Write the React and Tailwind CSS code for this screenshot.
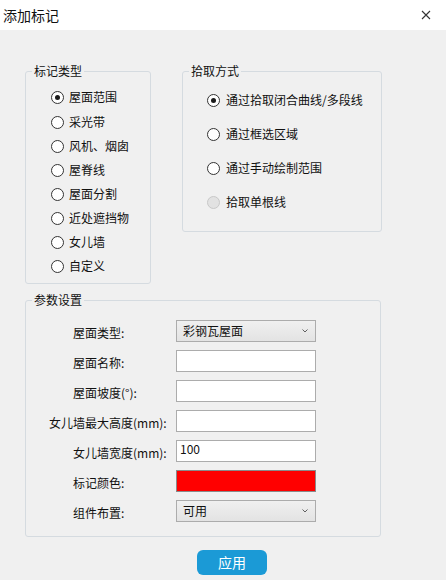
import React from 'react';

const font = { fontFamily: '"Noto Sans CJK SC", "Noto Sans", sans-serif' };

const Radio = ({ checked, disabled }) => (
  <span
    className={`w-[13px] h-[13px] rounded-full border flex items-center justify-center shrink-0 ${
      disabled ? 'border-[#c8c8c8] bg-[#e2e2e2]' : 'border-[#333] bg-white'
    }`}
  >
    {checked && <span className="w-[5px] h-[5px] rounded-full bg-[#1a1a1a]" />}
  </span>
);

const Chevron = () => (
  <svg width="8" height="6" viewBox="0 0 8 6" className="mr-[6px]">
    <path d="M1.5 1.5 L4 4 L6.5 1.5" fill="none" stroke="#606060" strokeWidth="1" />
  </svg>
);

const Combo = ({ value }) => (
  <div className="w-[140px] h-[22px] border border-[#acacac] bg-gradient-to-b from-[#f0f0f0] to-[#e3e3e3] flex items-center justify-between">
    <span className="pl-[6px] text-[12px] text-[#111]">{value}</span>
    <Chevron />
  </div>
);

const Input = ({ value }) => (
  <div className="w-[140px] h-[22px] border border-[#acacac] bg-white text-[12px] leading-[16px] pl-[3px] text-[#111]">
    {value}
  </div>
);

const App = () => {
  const types = ['屋面范围', '采光带', '风机、烟囱', '屋脊线', '屋面分割', '近处遮挡物', '女儿墙', '自定义'];
  const modes = ['通过拾取闭合曲线/多段线', '通过框选区域', '通过手动绘制范围', '拾取单根线'];
  const params = [
    { label: '屋面类型:', field: <Combo value="彩钢瓦屋面" /> },
    { label: '屋面名称:', field: <Input /> },
    { label: '屋面坡度(°):', field: <Input /> },
    { label: '女儿墙最大高度(mm):', field: <Input />, long: true },
    { label: '女儿墙宽度(mm):', field: <Input value="100" /> },
    { label: '标记颜色:', field: <div className="w-[140px] h-[22px] border border-[#8a8a8a] bg-[#ff0000]" /> },
    { label: '组件布置:', field: <Combo value="可用" /> },
  ];

  return (
    <div className="w-[446px] h-[580px] bg-[#f0f0f0] text-[#111] overflow-hidden" style={font}>
      {/* 标题栏 */}
      <div className="h-[30px] bg-white flex items-center justify-between pl-[3px] pr-[15px]">
        <span className="text-[14px] text-[#111]">添加标记</span>
        <svg width="10" height="10" viewBox="0 0 10 10">
          <path d="M1 1 L9 9 M9 1 L1 9" stroke="#333" strokeWidth="1.1" />
        </svg>
      </div>

      <div className="pl-[25px] pt-[33px]">
        <div className="flex gap-[31px] items-start">
          {/* 标记类型 */}
          <fieldset className="w-[126px] border border-[#d5dbe0] rounded-[3px] pb-[5px]">
            <legend className="ml-[6px] px-[2px] text-[12px] leading-[16px]">标记类型</legend>
            <div className="pt-[6px] pl-[25px] flex flex-col">
              {types.map((t, i) => (
                <div key={t} className={`flex items-center gap-[5px] h-[24px] text-[12px] ${i === 1 ? 'mt-[1px]' : ''}`}>
                  <Radio checked={i === 0} />
                  <span>{t}</span>
                </div>
              ))}
            </div>
          </fieldset>

          {/* 拾取方式 */}
          <fieldset className="w-[200px] border border-[#d5dbe0] rounded-[3px] pb-[12px]">
            <legend className="ml-[6px] px-[2px] text-[12px] leading-[16px]">拾取方式</legend>
            <div className="pt-[4px] pl-[24px] flex flex-col">
              {modes.map((m, i) => (
                <div key={m} className="flex items-center gap-[6px] h-[34px] text-[12px]">
                  <Radio checked={i === 0} disabled={i === 3} />
                  <span>{m}</span>
                </div>
              ))}
            </div>
          </fieldset>
        </div>

        {/* 参数设置 */}
        <fieldset className="w-[356px] mt-[8px] border border-[#d5dbe0] rounded-[3px] pb-[14px]">
          <legend className="ml-[6px] px-[2px] text-[12px] leading-[16px]">参数设置</legend>
          <div className="pt-[12px] flex flex-col gap-[8px]">
            {params.map((p) => (
              <div key={p.label} className="flex items-center h-[22px]">
                <div className={`w-[150px] text-[12px] whitespace-nowrap pt-[4px] ${p.long ? 'pl-[23px]' : 'pl-[47px]'}`}>
                  {p.label}
                </div>
                {p.field}
              </div>
            ))}
          </div>
        </fieldset>

        <button className="mt-[13px] ml-[172px] w-[70px] h-[25px] rounded-[6px] bg-[#1b9ad6] text-white text-[14px] flex items-center justify-center">
          应用
        </button>
      </div>
    </div>
  );
};

export default App;
